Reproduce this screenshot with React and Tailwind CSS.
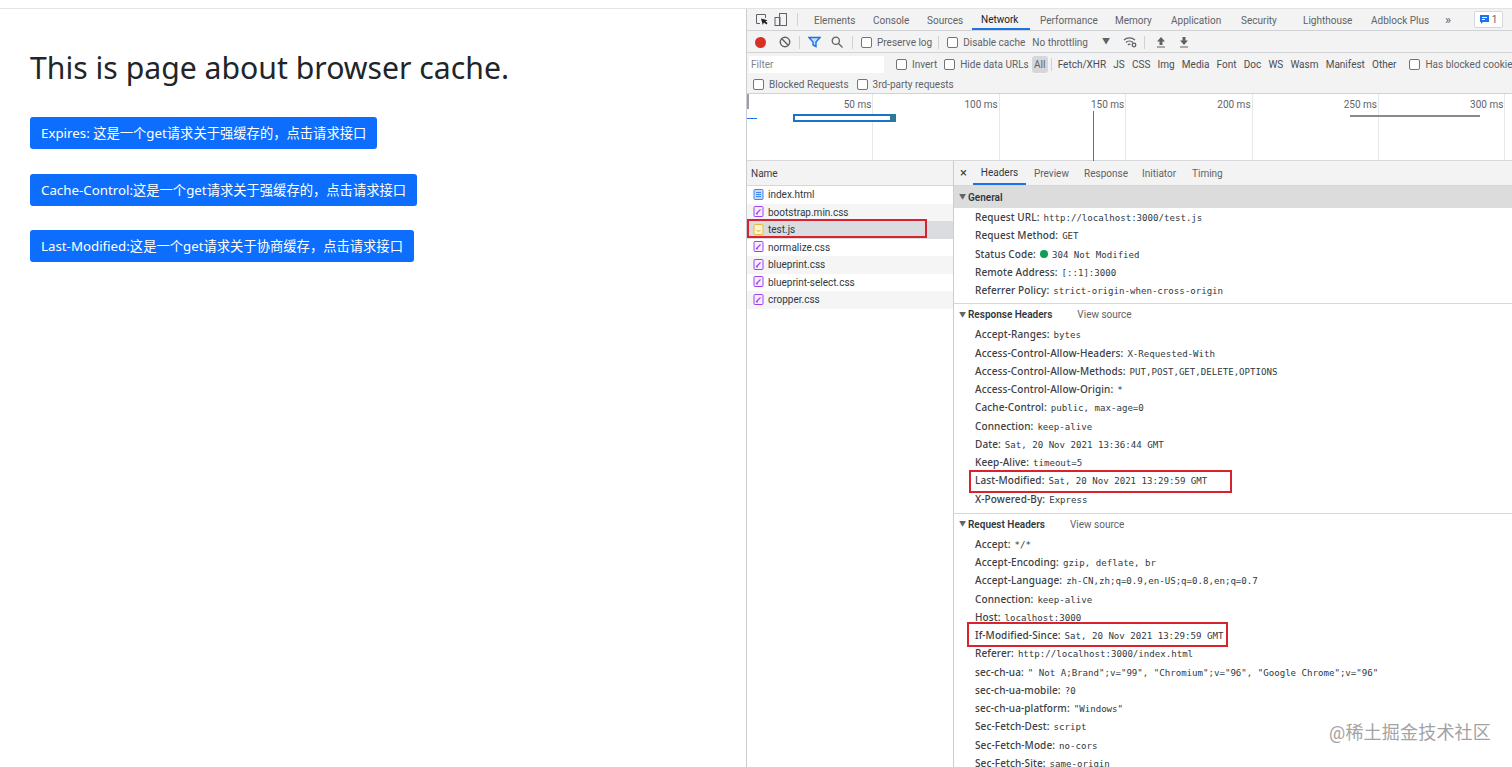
import React from "react";

const SANS = "font-['Noto_Sans','Noto_Sans_CJK_SC',sans-serif]";
const TOOLS = "font-['Roboto','Noto_Sans_CJK_SC',sans-serif]";

const tabs = [
  { label: "Elements", cls: "w-[59px]" },
  { label: "Console", cls: "w-[54px]" },
  { label: "Sources", cls: "w-[54px]" },
  { label: "Network", cls: "w-[58px] -ml-[9px] pl-[9px] mr-[10px] border-b-2 border-[#1a73e8] text-[#202124]" },
  { label: "Performance", cls: "w-[75px]" },
  { label: "Memory", cls: "w-[56px]" },
  { label: "Application", cls: "w-[70px]" },
  { label: "Security", cls: "w-[62px]" },
  { label: "Lighthouse", cls: "w-[68px]" },
  { label: "Adblock Plus", cls: "w-[74px]" },
];

const files = [
  { name: "index.html", type: "doc", bg: "bg-white" },
  { name: "bootstrap.min.css", type: "css", bg: "bg-[#f5f5f5]" },
  { name: "test.js", type: "js", bg: "bg-[#dadce0]" },
  { name: "normalize.css", type: "css", bg: "bg-white" },
  { name: "blueprint.css", type: "css", bg: "bg-[#f5f5f5]" },
  { name: "blueprint-select.css", type: "css", bg: "bg-white" },
  { name: "cropper.css", type: "css", bg: "bg-[#f5f5f5]" },
];

const general = [
  ["Request URL:", "http://localhost:3000/test.js"],
  ["Request Method:", "GET"],
  ["Status Code:", "304 Not Modified", true],
  ["Remote Address:", "[::1]:3000"],
  ["Referrer Policy:", "strict-origin-when-cross-origin"],
];

const responseHeaders = [
  ["Accept-Ranges:", "bytes"],
  ["Access-Control-Allow-Headers:", "X-Requested-With"],
  ["Access-Control-Allow-Methods:", "PUT,POST,GET,DELETE,OPTIONS"],
  ["Access-Control-Allow-Origin:", "*"],
  ["Cache-Control:", "public, max-age=0"],
  ["Connection:", "keep-alive"],
  ["Date:", "Sat, 20 Nov 2021 13:36:44 GMT"],
  ["Keep-Alive:", "timeout=5"],
  ["Last-Modified:", "Sat, 20 Nov 2021 13:29:59 GMT"],
  ["X-Powered-By:", "Express"],
];

const requestHeaders = [
  ["Accept:", "*/*"],
  ["Accept-Encoding:", "gzip, deflate, br"],
  ["Accept-Language:", "zh-CN,zh;q=0.9,en-US;q=0.8,en;q=0.7"],
  ["Connection:", "keep-alive"],
  ["Host:", "localhost:3000"],
  ["If-Modified-Since:", "Sat, 20 Nov 2021 13:29:59 GMT"],
  ["Referer:", "http://localhost:3000/index.html"],
  ["sec-ch-ua:", '" Not A;Brand";v="99", "Chromium";v="96", "Google Chrome";v="96"'],
  ["sec-ch-ua-mobile:", "?0"],
  ["sec-ch-ua-platform:", '"Windows"'],
  ["Sec-Fetch-Dest:", "script"],
  ["Sec-Fetch-Mode:", "no-cors"],
  ["Sec-Fetch-Site:", "same-origin"],
];

const Check = ({ label, cls = "" }) => (
  <div className={`flex items-center gap-[5px] shrink-0 ${cls}`}>
    <span className="w-[11px] h-[11px] rounded-[2px] border border-[#70757a] bg-white" />
    <span>{label}</span>
  </div>
);

const FileIcon = ({ type }) => {
  if (type === "doc") {
    return (
      <svg width="12" height="12" viewBox="0 0 12 12">
        <rect x="1" y="0.5" width="9" height="10" rx="1" fill="#c6dafc" stroke="#4285f4" />
        <path d="M3 3.5h5M3 5.5h5M3 7.5h5" stroke="#4285f4" />
      </svg>
    );
  }
  if (type === "js") {
    return (
      <svg width="12" height="12" viewBox="0 0 12 12">
        <rect x="1" y="0.5" width="9" height="10" rx="1" fill="#fdf3d0" stroke="#e8b93c" />
        <path d="M4 6v1h3V6" stroke="#e8b93c" fill="none" />
      </svg>
    );
  }
  return (
    <svg width="12" height="12" viewBox="0 0 12 12">
      <rect x="1" y="0.5" width="9" height="10" rx="1" fill="#f6eefc" stroke="#a142f4" />
      <path d="M3 8l4.5-4.5M3.5 8H5" stroke="#a142f4" strokeWidth="1.2" />
    </svg>
  );
};

const HeaderRow = ({ name, value, dot }) => (
  <div className="h-[18.25px] leading-[18.25px] flex items-baseline pl-[21px] whitespace-nowrap text-[#3c4043]">
    <span className={`font-medium text-[10px] tracking-[0.1px] mr-[4px] ${SANS}`}>{name}</span>
    {dot && <span className="w-[8px] h-[8px] rounded-full bg-[#0f9d58] mr-[4px] self-center" />}
    <span className="font-['DejaVu_Sans_Mono',monospace] text-[9.1px] text-[#303942]">{value}</span>
  </div>
);

const SectionTitle = ({ title, source }) => (
  <div className="h-[21px] flex items-center pl-[5px] whitespace-nowrap text-[10px]">
    <span className="text-[7px] text-[#5f6368] mr-[2px]">▼</span>
    <span className="font-semibold text-[#303942]">{title}</span>
    {source && <span className="text-[#5f6368] ml-[25px]">View source</span>}
  </div>
);

const Timeline = () => (
  <div className="relative h-[67px] shrink-0 flex border-b border-[#d5d7da] text-[10px] text-[#5f6368]">
    {["50 ms", "100 ms", "150 ms", "200 ms", "250 ms", "300 ms"].map((t) => (
      <div key={t} className="w-[126.4px] shrink-0 h-full border-r border-[#e8e8e8] text-right pr-[1px] pt-[3px]">
        {t}
      </div>
    ))}
    {/* marks drawn over the ruler */}
    <span className="absolute left-0 top-0 w-[2px] h-[15px] bg-[#9aa0a6]" />
    <span className="absolute left-0 top-[24px] w-[10px] h-[1px] bg-[#1a73e8]" />
    <span className="absolute left-[46px] top-[20px] w-[103px] h-[8px] border-2 border-[#1a73c8] bg-white" />
    <span className="absolute left-[143px] top-[20px] w-[6px] h-[8px] bg-[#2b7a9e]" />
    <span className="absolute left-[346px] top-[17px] w-[1px] h-[50px] bg-[#2a7fc4]" />
    <span className="absolute left-[603px] top-[21px] w-[130px] h-[2px] bg-[#8a8a8a]" />
  </div>
);

const DevTools = () => (
  <div className={`relative flex-1 min-w-0 h-full flex flex-col border-l border-[#cbcdd1] overflow-hidden text-[10px] ${TOOLS}`}>
    {/* top tabs */}
    <div className="h-[22px] shrink-0 flex items-stretch bg-[#f3f3f3] border-b border-[#d0d2d5] text-[#5f6368] whitespace-nowrap">
      <div className="w-[67px] flex items-center pl-[8px] gap-[6px] shrink-0">
        <svg width="13" height="13" viewBox="0 0 13 13" fill="none" stroke="#5f6368">
          <path d="M5 10.5H1.5v-9h9V5" />
          <path d="M6 5.5l1.8 6.5 1.2-2.5 2.5 2L12.5 10l-2-1.8 2-1z" fill="#202124" stroke="none" />
        </svg>
        <svg width="14" height="14" viewBox="0 0 14 14" fill="none" stroke="#5f6368">
          <rect x="5.5" y="0.5" width="7" height="12" />
          <rect x="1" y="4.5" width="5" height="8" />
        </svg>
        <span className="w-px h-[13px] bg-[#cfd1d4] ml-[3px]" />
      </div>
      {tabs.map((t) => (
        <div key={t.label} className={`shrink-0 flex items-center pt-px ${t.cls}`}>{t.label}</div>
      ))}
      <span className="w-[29px] shrink-0 flex items-center text-[13px] leading-none">»</span>
      <div className="my-[2px] w-[29px] shrink-0 rounded-[2px] border border-[#d5d7da] flex items-center justify-center gap-[3px] bg-white">
        <svg width="9" height="9" viewBox="0 0 9 9">
          <path d="M0 0h9v7H3L1 9V7H0z" fill="#1a73e8" />
          <path d="M2 2.5h5M2 4.5h3" stroke="#fff" />
        </svg>
        <span>1</span>
      </div>
    </div>

    {/* network toolbar */}
    <div className="h-[22px] shrink-0 flex items-center pt-px bg-[#f3f3f3] border-b border-[#d0d2d5] text-[#5f6368] whitespace-nowrap">
      <span className="ml-[8px] w-[11px] h-[11px] rounded-full bg-[#d93025]" />
      <svg className="ml-[13px]" width="12" height="12" viewBox="0 0 12 12" fill="none" stroke="#5f6368" strokeWidth="1.5">
        <circle cx="6" cy="6" r="4.7" />
        <path d="M2.8 2.8l6.4 6.4" />
      </svg>
      <span className="ml-[8px] w-px h-[13px] bg-[#cfd1d4]" />
      <svg className="ml-[8px]" width="13" height="12" viewBox="0 0 13 12" fill="#c6dafc" stroke="#1a73e8" strokeWidth="1.4">
        <path d="M1 1.5h11L8 6v4.5L5 9V6z" />
      </svg>
      <svg className="ml-[10px]" width="12" height="12" viewBox="0 0 12 12" fill="none" stroke="#5f6368" strokeWidth="1.3">
        <circle cx="4.8" cy="4.8" r="3.6" />
        <path d="M7.5 7.5l4 4" />
      </svg>
      <span className="ml-[9px] w-px h-[13px] bg-[#cfd1d4]" />
      <Check label="Preserve log" cls="ml-[8px]" />
      <span className="ml-[6px] w-px h-[13px] bg-[#cfd1d4]" />
      <Check label="Disable cache" cls="ml-[8px]" />
      <span className="ml-[7px]">No throttling</span>
      <span className="ml-[14px] text-[8px]">▼</span>
      <svg className="ml-[13px]" width="15" height="12" viewBox="0 0 15 12" fill="none" stroke="#5f6368" strokeWidth="1.3">
        <path d="M1 4a8 8 0 0 1 11 0M3 6.5a5 5 0 0 1 7 0M5 9a2 2 0 0 1 2.5-.5" />
        <circle cx="11" cy="9" r="1.8" />
      </svg>
      <span className="ml-[6px] w-px h-[13px] bg-[#cfd1d4]" />
      <svg className="ml-[11px]" width="10" height="11" viewBox="0 0 10 11" fill="#5f6368">
        <path d="M5 0l4 4.5H6.5V8h-3V4.5H1zM1 9.5h8v1H1z" />
      </svg>
      <svg className="ml-[13px]" width="10" height="11" viewBox="0 0 10 11" fill="#5f6368">
        <path d="M3.5 0h3v3.5H9L5 8 1 3.5h2.5zM1 9.5h8v1H1z" />
      </svg>
    </div>

    {/* filter bar */}
    <div className="h-[41px] shrink-0 bg-[#f3f3f3] border-b border-[#d0d2d5] text-[#5f6368] whitespace-nowrap">
      <div className="h-[22px] flex items-center">
        <div className="ml-[2px] w-[135px] shrink-0 h-[17px] bg-white flex items-center pl-[2px] text-[#80868b]">Filter</div>
        <Check label="Invert" cls="ml-[12px]" />
        <Check label="Hide data URLs" cls="ml-[7px]" />
        <span className="ml-[3px] w-[16px] shrink-0 h-[17px] rounded-[3px] bg-[#d5d7da] flex items-center justify-center">All</span>
        <span className="ml-[3px] w-px shrink-0 h-[13px] bg-[#cfd1d4]" />
        <div className="flex items-center gap-[7.2px] ml-[6px] shrink-0 text-[#4a4d52]">
          {["Fetch/XHR", "JS", "CSS", "Img", "Media", "Font", "Doc", "WS", "Wasm", "Manifest", "Other"].map((f) => (
            <span key={f}>{f}</span>
          ))}
        </div>
        <Check label="Has blocked cookies" cls="ml-[13px]" />
      </div>
      <div className="h-[18px] flex items-center pl-[6px] gap-[8px]">
        <Check label="Blocked Requests" />
        <Check label="3rd-party requests" />
      </div>
    </div>

    <Timeline />

    {/* split view */}
    <div className="flex-1 min-h-0 flex">
      <div className="relative w-[207px] shrink-0 border-r border-[#cbcdd1] bg-white text-[#303942]">
        <div className="h-[25px] flex items-center pl-[4px] border-b border-[#d5d7da] bg-[#f3f3f3] text-[#3c4043]">Name</div>
        {files.map((f) => (
          <div key={f.name} className={`h-[17.5px] flex items-center pl-[6px] gap-[3px] ${f.bg}`}>
            <FileIcon type={f.type} />
            <span>{f.name}</span>
          </div>
        ))}
        <span className="absolute left-0 top-[58px] w-[180px] h-[19px] border-2 border-[#d8232f]" />
      </div>

      <div className="relative flex-1 min-w-0 bg-white">
        <div className="h-[25px] flex items-stretch border-b border-[#d5d7da] bg-[#f3f3f3] text-[#5f6368] whitespace-nowrap">
          <span className="w-[19px] flex items-center justify-center text-[13px] text-[#3c4043]">×</span>
          <div className="w-[53px] flex items-center justify-center border-b-2 border-[#1a73e8] text-[#303942]">Headers</div>
          <span className="flex items-center ml-[8px] w-[50px]">Preview</span>
          <span className="flex items-center w-[58px]">Response</span>
          <span className="flex items-center w-[50px]">Initiator</span>
          <span className="flex items-center">Timing</span>
        </div>

        <div className="h-[22px] flex items-center pl-[5px] bg-[#dcdcdc] text-[#303942]">
          <span className="text-[7px] text-[#5f6368] mr-[2px]">▼</span>
          <span className="font-semibold">General</span>
        </div>
        <div className="pb-[4px] border-b border-[#d5d7da]">
          {general.map(([n, v, d]) => <HeaderRow key={n} name={n} value={v} dot={d} />)}
        </div>

        <SectionTitle title="Response Headers" source />
        <div className="pb-[5px] border-b border-[#d5d7da]">
          {responseHeaders.map(([n, v]) => <HeaderRow key={n} name={n} value={v} />)}
        </div>

        <SectionTitle title="Request Headers" source />
        <div>
          {requestHeaders.map(([n, v]) => <HeaderRow key={n} name={n} value={v} />)}
        </div>

        {/* red annotation boxes */}
        <span className="absolute left-[15px] top-[309px] w-[263px] h-[23px] border-2 border-[#d8232f]" />
        <span className="absolute left-[13px] top-[461px] w-[261px] h-[25px] border-2 border-[#d8232f]" />
      </div>
    </div>

    <span className="absolute right-[21px] bottom-[21px] text-[18px] text-[#a3a3a3] tracking-[0.2px] whitespace-nowrap">@稀土掘金技术社区</span>
  </div>
);

const CacheButton = ({ children }) => (
  <button className="block h-[32px] px-[11px] rounded-[3px] bg-[#0d6efd] text-white text-[13.3px] leading-[32px] whitespace-nowrap">
    {children}
  </button>
);

export default function App() {
  return (
    <div className="h-[767px] overflow-hidden bg-white flex flex-col">
      <div className="h-[9px] shrink-0 border-b border-[#e3e3e3]" />
      <div className="flex-1 min-h-0 flex">
        <div className={`w-[746px] shrink-0 pl-[30px] ${SANS}`}>
          <h1 className="mt-[36px] text-[30.2px] leading-[46px] text-[#212529] font-normal">This is page about browser cache.</h1>
          <div className="mt-[26px] flex flex-col gap-[24.5px] items-start">
            <CacheButton>Expires: 这是一个get请求关于强缓存的，点击请求接口</CacheButton>
            <CacheButton>Cache-Control:这是一个get请求关于强缓存的，点击请求接口</CacheButton>
            <CacheButton>Last-Modified:这是一个get请求关于协商缓存，点击请求接口</CacheButton>
          </div>
        </div>
        <DevTools />
      </div>
    </div>
  );
}
